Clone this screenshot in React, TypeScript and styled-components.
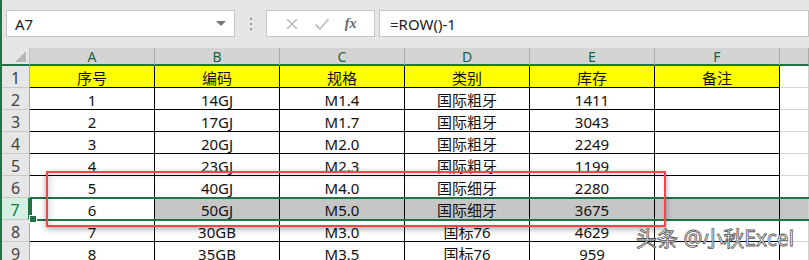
import React from 'react';
import styled, { createGlobalStyle, css } from 'styled-components';

const GlobalStyle = createGlobalStyle`
  html, body {
    margin: 0;
    padding: 0;
    background: #fff;
    overflow: hidden;
  }
  body {
    font-family: 'Noto Sans', 'Noto Sans CJK SC', sans-serif;
  }
`;

const COLS = ['A', 'B', 'C', 'D', 'E', 'F'];

const ROWS: string[][] = [
  ['序号', '编码', '规格', '类别', '库存', '备注'],
  ['1', '14GJ', 'M1.4', '国际粗牙', '1411', ''],
  ['2', '17GJ', 'M1.7', '国际粗牙', '3043', ''],
  ['3', '20GJ', 'M2.0', '国际粗牙', '2249', ''],
  ['4', '23GJ', 'M2.3', '国际粗牙', '1199', ''],
  ['5', '40GJ', 'M4.0', '国际细牙', '2280', ''],
  ['6', '50GJ', 'M5.0', '国际细牙', '3675', ''],
  ['7', '30GB', 'M3.0', '国标76', '4629', ''],
  ['8', '35GB', 'M3.5', '国标76', '959', ''],
];

const ACTIVE_ROW = 7;

const Page = styled.div`
  position: relative;
  width: 809px;
  height: 260px;
  overflow: hidden;
  border-left: 2px solid #217346;
  box-sizing: border-box;
  background: #fff;
`;

const FormulaBar = styled.div`
  display: flex;
  align-items: flex-start;
  height: 48px;
  padding: 10px 0 0 4px;
  box-sizing: border-box;
  background: #e6e6e6;
`;

const Box = styled.div<{ $w?: number; $grow?: boolean }>`
  display: flex;
  align-items: center;
  height: 27px;
  box-sizing: border-box;
  background: #fff;
  border: 1px solid #c6c6c6;
  ${(p) => (p.$grow ? 'flex: 1;' : `width: ${p.$w}px;`)}
`;

const NameText = styled.span`
  flex: 1;
  padding-left: 8px;
  font-size: 15px;
  color: #222;
`;

const Caret = styled.span`
  width: 0;
  height: 0;
  margin-right: 8px;
  border-left: 5px solid transparent;
  border-right: 5px solid transparent;
  border-top: 5px solid #777;
`;

const Grip = styled.div`
  display: flex;
  flex-direction: column;
  justify-content: center;
  gap: 3px;
  width: 31px;
  height: 27px;
  align-items: center;
  span {
    width: 2px;
    height: 2px;
    background: #9a9a9a;
  }
`;

const FxBox = styled(Box)`
  justify-content: space-around;
  padding: 0 10px;
  margin-right: 4px;
`;

const Fx = styled.span`
  font-family: 'Liberation Serif', 'DejaVu Serif', serif;
  font-style: italic;
  font-weight: bold;
  font-size: 14px;
  color: #666;
`;

const FormulaText = styled.span`
  padding-left: 10px;
  font-size: 15px;
  color: #222;
`;

const Sheet = styled.div`
  display: grid;
  grid-template-columns: 28px repeat(6, 125px) 1fr;
  grid-template-rows: 18px;
  grid-auto-rows: 22px;
`;

const Corner = styled.div`
  position: relative;
  background: #e6e6e6;
  border-right: 1px solid #c0c0c0;
  border-bottom: 2px solid #217346;
  &::after {
    content: '';
    position: absolute;
    right: 3px;
    bottom: 2px;
    border-left: 11px solid transparent;
    border-bottom: 11px solid #b8b8b8;
  }
`;

const ColHead = styled.div`
  display: flex;
  align-items: center;
  justify-content: center;
  background: #d4d4d4;
  border-right: 1px solid #ababab;
  border-bottom: 2px solid #217346;
  font-size: 14px;
  color: #1f5f46;
`;

const RowHead = styled.div<{ $active?: boolean }>`
  display: flex;
  align-items: center;
  justify-content: center;
  padding-top: 2px;
  box-sizing: border-box;
  font-size: 16px;
  color: #444;
  background: #e6e6e6;
  border-right: 1px solid #ababab;
  border-bottom: 1px solid #c8c8c8;
  ${(p) =>
    p.$active &&
    css`
      background: #d3f0e0;
      color: #217346;
      border-right: 2px solid #217346;
    `}
`;

const Cell = styled.div<{ $head?: boolean; $sel?: boolean; $blank?: boolean }>`
  display: flex;
  align-items: center;
  justify-content: center;
  padding-top: 2px;
  box-sizing: border-box;
  font-size: 15px;
  color: #111;
  white-space: nowrap;
  border-right: 1px solid ${(p) => (p.$blank ? '#d4d4d4' : '#000')};
  border-bottom: 1px solid ${(p) => (p.$blank ? '#d4d4d4' : '#000')};
  background: ${(p) => (p.$sel ? '#c6c6c6' : p.$head ? '#ffff00' : '#fff')};
`;

const Selection = styled.div`
  position: absolute;
  left: 28px;
  right: -4px;
  top: 197px;
  height: 24px;
  border: 2px solid #217346;
  box-sizing: border-box;
  pointer-events: none;
  &::after {
    content: '';
    position: absolute;
    left: -3px;
    bottom: -4px;
    width: 6px;
    height: 6px;
    background: #217346;
    border: 1px solid #fff;
  }
`;

const Highlight = styled.div`
  position: absolute;
  left: 44px;
  top: 171px;
  width: 620px;
  height: 56px;
  border: 2px solid #f04848;
  box-sizing: border-box;
  box-shadow: 0 2px 6px rgba(0, 0, 0, 0.35), inset 2px 2px 6px rgba(0, 0, 0, 0.15);
  pointer-events: none;
`;

const Watermark = styled.div`
  position: absolute;
  left: 634px;
  top: 222px;
  font-size: 21px;
  color: #fff;
  -webkit-text-stroke: 0.8px #555;
  font-family: 'Noto Sans', 'Noto Sans CJK SC', sans-serif;
`;

const CrossIcon = () => (
  <svg width="14" height="14" viewBox="0 0 14 14">
    <path d="M2 2 L12 12 M12 2 L2 12" stroke="#bdbdbd" strokeWidth="1.6" fill="none" />
  </svg>
);

const CheckIcon = () => (
  <svg width="16" height="14" viewBox="0 0 16 14">
    <path d="M1.5 7.5 L6 12 L14.5 2" stroke="#bdbdbd" strokeWidth="1.8" fill="none" />
  </svg>
);

export default function App() {
  return (
    <>
      <GlobalStyle />
      <Page>
        <FormulaBar>
          <Box $w={229}>
            <NameText>A7</NameText>
            <Caret />
          </Box>
          <Grip>
            <span />
            <span />
            <span />
          </Grip>
          <FxBox $w={109}>
            <CrossIcon />
            <CheckIcon />
            <Fx>fx</Fx>
          </FxBox>
          <Box $grow>
            <FormulaText>=ROW()-1</FormulaText>
          </Box>
        </FormulaBar>
        <Sheet>
          <Corner />
          {COLS.map((c) => (
            <ColHead key={c}>{c}</ColHead>
          ))}
          <ColHead />
          {ROWS.map((row, r) => {
            const n = r + 1;
            const active = n === ACTIVE_ROW;
            return (
              <React.Fragment key={n}>
                <RowHead $active={active}>{n}</RowHead>
                {row.map((v, c) => (
                  <Cell key={c} $head={n === 1} $sel={active && c > 0}>
                    {v}
                  </Cell>
                ))}
                <Cell $blank $sel={active} />
              </React.Fragment>
            );
          })}
        </Sheet>
        <Selection />
        <Highlight />
        <Watermark>头条 @小秋Excel</Watermark>
      </Page>
    </>
  );
}
